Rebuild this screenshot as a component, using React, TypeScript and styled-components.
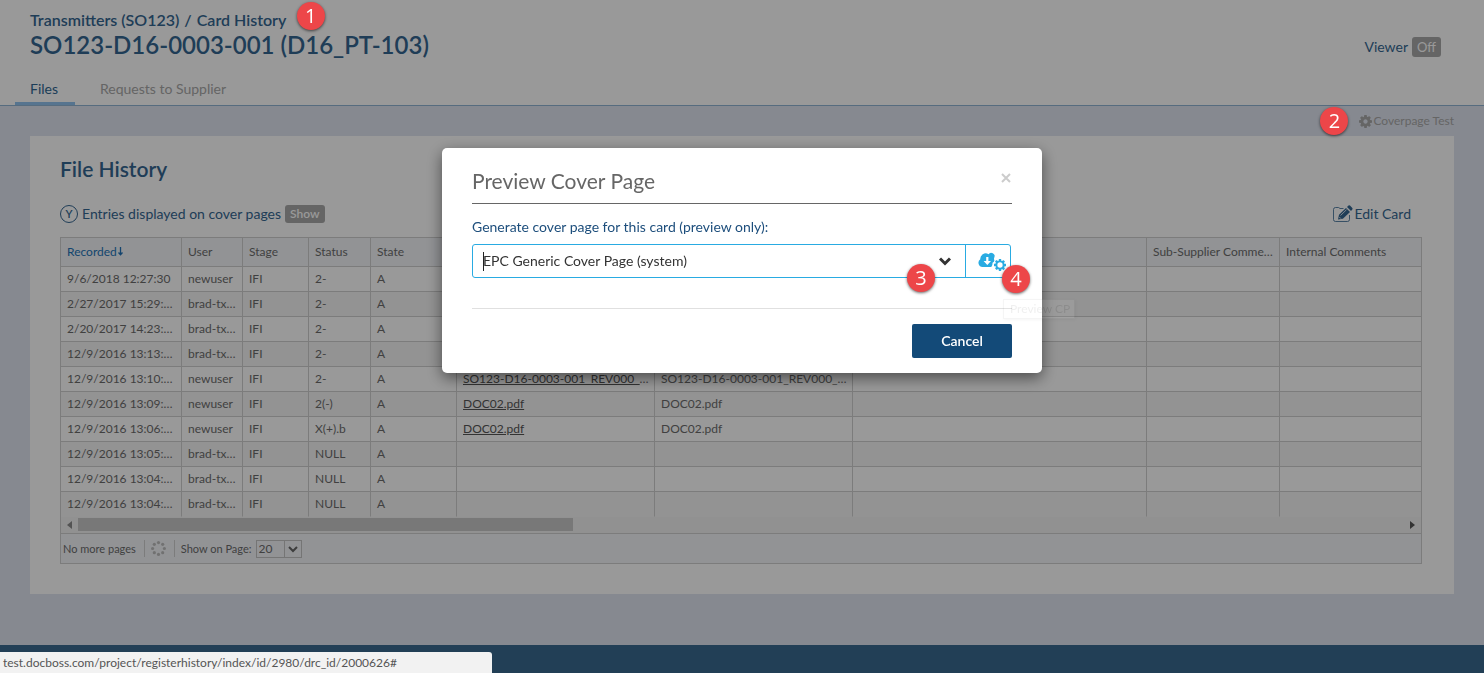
import React from "react";
import styled, { createGlobalStyle } from "styled-components";

const Global = createGlobalStyle`
  *, *::before, *::after { box-sizing: border-box; }
  body {
    margin: 0;
    font-family: Lato, "Liberation Sans", sans-serif;
    font-size: 14px;
    line-height: 20px;
    color: #356792;
    background: #e0e5f0;
  }
  button, input, select { font: inherit; color: inherit; }
  h1, h2, p { margin: 0; }
`;

const Page = styled.div`
  min-height: 100vh;
  display: flex;
  flex-direction: column;
`;

const Header = styled.header`
  background: #fff;
  border-bottom: 1px solid #90b4d4;
  display: flex;
  justify-content: space-between;
  padding: 10px 43px 0 30px;
`;

const Crumbs = styled.nav`
  display: flex;
  align-items: center;
  gap: 5px;
  font-size: 16px;
  font-weight: 600;
`;

const CrumbLink = styled.a`
  color: inherit;
  text-decoration: none;
`;

const Title = styled.h1`
  font-size: 24px;
  line-height: 30px;
  font-weight: 600;
`;

const Tabs = styled.div`
  display: flex;
  gap: 10px;
  margin: 14px 0 0 -15px;
`;

const Tab = styled.a<{ $active?: boolean }>`
  min-width: 60px;
  padding: 5px 15px 3px;
  border-bottom: 3px solid ${(p) => (p.$active ? "#8fc1ee" : "transparent")};
  color: ${(p) => (p.$active ? "#2f6793" : "#a8a8a8")};
  text-decoration: none;
`;

const Viewer = styled.div`
  display: flex;
  align-items: center;
  gap: 4px;
  height: 20px;
  margin-top: 27px;
`;

const Toggle = styled.button<{ $small?: boolean }>`
  height: ${(p) => (p.$small ? 18 : 20)}px;
  padding: 0 5px;
  border: 0;
  border-radius: 3px;
  background: #a8a8a8;
  color: #fff;
  font-size: ${(p) => (p.$small ? 12 : 13)}px;
  font-weight: ${(p) => (p.$small ? 600 : 400)};
  line-height: 18px;
`;

const Main = styled.main`
  flex: 1;
  padding: 0 30px 51px;
`;

const ActionBar = styled.div`
  display: flex;
  justify-content: flex-end;
  align-items: center;
  height: 30px;
  color: #a8a8a8;
  font-size: 12px;
`;

const IconLink = styled.a`
  position: relative;
  display: inline-flex;
  align-items: center;
  gap: 1px;
  color: inherit;
  text-decoration: none;
`;

const Panel = styled.section`
  background: #fff;
  padding: 20px 32px 30px 30px;
`;

const PanelTitle = styled.h2`
  font-size: 21px;
  line-height: 26px;
  font-weight: 600;
`;

const PanelBar = styled.div`
  display: flex;
  justify-content: space-between;
  align-items: center;
  padding: 22px 11px 13px 0;
`;

const Legend = styled.div`
  display: flex;
  align-items: center;
  gap: 4px;
`;

const CircleMark = styled.span`
  width: 18px;
  height: 18px;
  border: 1px solid #356792;
  border-radius: 50%;
  font-size: 11px;
  font-weight: 600;
  line-height: 16px;
  text-align: center;
`;

const Grid = styled.div`
  border: 1px solid #cfcfcf;
  color: #6c6c6c;
`;

const Table = styled.table`
  width: 100%;
  table-layout: fixed;
  border-collapse: separate;
  border-spacing: 0;
  font-size: 12px;
  line-height: 16px;
`;

const HeadCell = styled.th<{ $sorted?: boolean }>`
  height: 29px;
  padding: 0 4px 0 6px;
  background: #f3f5f9;
  border-right: 1px solid #cfcfcf;
  border-bottom: 1px solid #cfcfcf;
  color: ${(p) => (p.$sorted ? "#2474b8" : "#6c6c6c")};
  font-weight: 400;
  text-align: left;
  white-space: nowrap;
  overflow: hidden;
  text-overflow: ellipsis;
  &:last-child { border-right: 0; }
`;

const Row = styled.tr`
  &:nth-child(even) { background: #f5f5f5; }
  &:last-child td { border-bottom-color: transparent; }
`;

const Cell = styled.td`
  height: 25px;
  padding: 0 4px 0 6px;
  border-right: 1px solid #cfcfcf;
  border-bottom: 1px solid #cfcfcf;
  white-space: nowrap;
  overflow: hidden;
  text-overflow: ellipsis;
  &:last-child { border-right: 0; }
`;

const FileLink = styled.a`
  color: #555;
  text-decoration: underline;
`;

const ScrollBar = styled.div`
  display: flex;
  align-items: center;
  gap: 6px;
  height: 16px;
  padding: 0 6px 1px;
  background: #f2f2f2;
`;

const ScrollTrack = styled.div`
  flex: 1;
`;

const ScrollThumb = styled.div`
  width: 37.3%;
  height: 13px;
  background: #c8c8c8;
`;

const Pager = styled.div`
  display: flex;
  align-items: center;
  height: 30px;
  padding: 0 2px;
  border-top: 1px solid #cfcfcf;
  background: #f3f5f9;
  font-size: 11px;
`;

const PagerDivider = styled.span`
  width: 1px;
  height: 17px;
  margin: 0 6px 0 8px;
  background: #cfcfcf;
`;

const PageSize = styled.span`
  position: relative;
  display: inline-flex;
  margin-left: 4px;
  svg {
    position: absolute;
    top: 6px;
    right: 4px;
    pointer-events: none;
  }
`;

const PageSizeSelect = styled.select`
  appearance: none;
  width: 46px;
  height: 18px;
  padding: 0 2px;
  border: 1px solid #c4c4c4;
  border-radius: 0;
  background: linear-gradient(#c4c4c4, #c4c4c4) 27px 0 / 1px 100% no-repeat;
  font-size: 12px;
  line-height: 14px;
`;

const Footer = styled.footer`
  height: 28px;
  background: #3a698f;
`;

const Overlay = styled.div`
  position: fixed;
  inset: 0;
  z-index: 10;
  display: flex;
  justify-content: center;
  align-items: flex-start;
  padding-top: 148px;
  background: rgba(0, 0, 0, 0.4);
`;

const Modal = styled.div`
  position: relative;
  width: 600px;
  padding: 19px 30px 15px;
  border-radius: 5px;
  background: #fff;
  box-shadow: 0 5px 15px rgba(0, 0, 0, 0.5);
`;

const ModalHead = styled.div`
  display: flex;
  justify-content: space-between;
  align-items: center;
  padding-bottom: 8px;
  border-bottom: 1px solid #666;
`;

const ModalTitle = styled.h2`
  color: #666;
  font-size: 21px;
  line-height: 28px;
  font-weight: 400;
`;

const CloseButton = styled.button`
  display: flex;
  padding: 0;
  margin-bottom: 7px;
  border: 0;
  background: none;
  color: #ccc;
`;

const FieldLabel = styled.label`
  display: block;
  margin: 13px 0 7px;
  color: #1d4e7c;
`;

const Combo = styled.div`
  position: relative;
  display: flex;
  width: 539px;
  height: 34px;
  border: 1px solid #29abe2;
  border-radius: 3px;
`;

const ComboSelect = styled.select`
  flex: 1;
  appearance: none;
  padding: 0 10px;
  border: 0;
  background: none;
  color: #333;
  outline: none;
`;

const TextCaret = styled.span`
  position: absolute;
  left: 10px;
  top: 7px;
  width: 1px;
  height: 19px;
  background: #222;
`;

const ComboArrow = styled.svg`
  position: absolute;
  right: 59px;
  top: 12px;
  pointer-events: none;
`;

const PreviewButton = styled.button`
  width: 45px;
  padding: 6px 0 0 8px;
  border: 0;
  border-left: 1px solid #29abe2;
  background: none;
  color: #29abe2;
`;

const Tooltip = styled.span`
  position: absolute;
  left: 530px;
  top: 54px;
  width: 72px;
  height: 20px;
  padding: 0 6px;
  border: 1px solid #888;
  background: #fff;
  box-shadow: 1px 1px 3px rgba(0, 0, 0, 0.5);
  color: #444;
  font-size: 12px;
  line-height: 18px;
  white-space: nowrap;
  opacity: 0.08;
`;

const ModalFoot = styled.div`
  display: flex;
  justify-content: flex-end;
  margin-top: 30px;
  padding-top: 15px;
  border-top: 1px solid #e0e0e0;
`;

const CancelButton = styled.button`
  width: 100px;
  height: 34px;
  border: 0;
  border-radius: 2px;
  background: #134a78;
  color: #fff;
  font-weight: 600;
`;

const Marker = styled.span<{ $left: number; $top: number }>`
  position: absolute;
  left: ${(p) => p.$left}px;
  top: ${(p) => p.$top}px;
  z-index: 20;
  width: 28px;
  height: 28px;
  border-radius: 50%;
  background: #ed4649;
  box-shadow: 0 1px 3px rgba(0, 0, 0, 0.6);
  color: #fff;
  font: 20px/28px "Open Sans", sans-serif;
  text-align: center;
`;

const MarkerAnchor = styled.span`
  position: relative;
`;

const StatusBar = styled.div`
  position: fixed;
  left: 0;
  bottom: 0;
  z-index: 30;
  width: 492px;
  height: 21px;
  padding: 0 3px;
  border-radius: 0 3px 0 0;
  background: #f2f2f2;
  color: #555;
  font-size: 12px;
  line-height: 21px;
  white-space: nowrap;
`;

const cogPath =
  "M1024 896q0-106-75-181t-181-75-181 75-75 181 75 181 181 75 181-75 75-181zm512-109v222q0 12-8 23t-20 13l-185 28q-19 54-39 91 35 50 107 138 10 12 10 25t-9 23q-27 37-99 108t-94 71q-12 0-26-9l-138-108q-44 23-91 38-16 136-29 186-7 28-36 28h-222q-14 0-24.500-8.500t-11.500-21.500l-28-184q-49-16-90-37l-141 107q-10 9-25 9-14 0-25-11-126-114-165-168-7-10-7-23 0-12 8-23 15-21 51-66.500t54-70.500q-27-50-41-99l-183-27q-13-2-21-12.500t-8-23.500v-222q0-12 8-23t19-13l186-28q14-46 39-92-40-57-107-138-10-12-10-24 0-10 9-23 26-36 98.500-107.500t94.500-71.500q13 0 26 10l138 107q44-23 91-38 16-136 29-186 7-28 36-28h222q14 0 24.500 8.500t11.500 21.500l28 184q49 16 90 37l142-107q9-9 24-9 13 0 25 10 129 119 165 170 7 8 7 22 0 12-8 23-15 21-51 66.500t-54 70.500q26 50 41 98l183 28q13 2 21 12.500t8 23.500z";

const CogIcon = ({ size }: { size: number }) => (
  <svg width={size} height={size} viewBox="0 128 1536 1536" fill="currentColor" aria-hidden="true">
    <path d={cogPath} />
  </svg>
);

const EditIcon = () => (
  <svg width="20" height="18" viewBox="0 0 20 18" aria-hidden="true">
    <path d="M10.500 3.500H7L5.500 2.500H2.500Q.5 2.500.5 4.500V14.500Q.5 16.500 2.500 16.500H14.500Q16.500 16.500 16.500 14.500V10" fill="none" stroke="currentColor" strokeOpacity=".8" />
    <path d="M5 14.500L6 9.800 13 2.900 17 6.900 9.900 13.700zM14 2L15.500.6Q16.200 0 17 .6L19.300 2.900Q20 3.700 19.300 4.500L18 5.900z" fill="currentColor" />
    <path d="M7.500 10.500L13.500 4.700M6.300 12l1.600 1.600" stroke="#fff" strokeWidth=".8" />
  </svg>
);

const PreviewIcon = () => (
  <svg width="28" height="20" viewBox="0 0 28 20" aria-hidden="true">
    <path d="M4.500 15A4.300 4.300 0 0 1 2.300 7.200 5.300 5.300 0 0 1 10.500 2.300 3.300 3.300 0 0 1 16.300 5.400Q15.600 6.800 16.400 8.300 16.300 10.200 14.600 10.800 14.600 13.500 13.300 15z" fill="currentColor" />
    <path d="M8.200 5h2.200v4h2.600l-3.700 4-3.700-4h2.600z" fill="#fff" />
    <svg x="16" y="7" width="12" height="12" viewBox="0 128 1536 1536">
      <path fill="currentColor" d={cogPath} />
      <circle cx="768" cy="896" r="340" fill="#fff" />
    </svg>
  </svg>
);

const Spinner = () => (
  <svg width="15" height="15" viewBox="0 0 16 16" fill="#bdbdbd" aria-hidden="true">
    {Array.from({ length: 8 }, (_, i) => (
      <circle
        key={i}
        cx={8 + 6.300 * Math.cos((i * Math.PI) / 4)}
        cy={8 + 6.300 * Math.sin((i * Math.PI) / 4)}
        r="1.7"
      />
    ))}
  </svg>
);

const columns: { label: string; width?: number }[] = [
  { label: "Recorded", width: 121 },
  { label: "User", width: 61 },
  { label: "Stage", width: 66 },
  { label: "Status", width: 62 },
  { label: "State", width: 86 },
  { label: "File", width: 198 },
  { label: "Original File", width: 198 },
  { label: "" },
  { label: "Sub-Supplier Comments", width: 133 },
  { label: "Internal Comments", width: 141 },
];

const longName = "SO123-D16-0003-001_REV000_A.pdf";

const rows: string[][] = [
  ["9/6/2018 12:27:30", "newuser", "2-", ""],
  ["2/27/2017 15:29:10", "brad-txmain", "2-", ""],
  ["2/20/2017 14:23:10", "brad-txmain", "2-", ""],
  ["12/9/2016 13:13:10", "brad-txmain", "2-", ""],
  ["12/9/2016 13:10:10", "newuser", "2-", longName],
  ["12/9/2016 13:09:10", "newuser", "2(-)", "DOC02.pdf"],
  ["12/9/2016 13:06:10", "newuser", "X(+).b", "DOC02.pdf"],
  ["12/9/2016 13:05:10", "brad-txmain", "NULL", ""],
  ["12/9/2016 13:04:10", "brad-txmain", "NULL", ""],
  ["12/9/2016 13:04:10", "brad-txmain", "NULL", ""],
];

export default function App() {
  return (
    <>
      <Global />
      <Page>
        <Header>
          <div>
            <Crumbs aria-label="Breadcrumb">
              <CrumbLink href="#">Transmitters (SO123)</CrumbLink>
              <span>/</span>
              <MarkerAnchor>
                Card History
                <Marker $left={100} $top={-8}>1</Marker>
              </MarkerAnchor>
            </Crumbs>
            <Title>SO123-D16-0003-001 (D16_PT-103)</Title>
            <Tabs>
              <Tab href="#" $active>Files</Tab>
              <Tab href="#">Requests to Supplier</Tab>
            </Tabs>
          </div>
          <Viewer>
            <span>Viewer</span>
            <Toggle>Off</Toggle>
          </Viewer>
        </Header>

        <Main>
          <ActionBar>
            <IconLink href="#">
              <CogIcon size={13} />
              Coverpage Test
              <Marker $left={-39} $top={-4}>2</Marker>
            </IconLink>
          </ActionBar>

          <Panel>
            <PanelTitle>File History</PanelTitle>
            <PanelBar>
              <Legend>
                <CircleMark>Y</CircleMark>
                <span>Entries displayed on cover pages</span>
                <Toggle $small>Show</Toggle>
              </Legend>
              <IconLink href="#">
                <EditIcon />
                Edit Card
              </IconLink>
            </PanelBar>

            <Grid>
              <Table>
                <colgroup>
                  {columns.map((c, i) => (
                    <col key={i} width={c.width} />
                  ))}
                </colgroup>
                <thead>
                  <tr>
                    {columns.map((c, i) => (
                      <HeadCell key={i} scope="col" $sorted={i === 0}>
                        {c.label}
                        {i === 0 && (
                          <svg width="7" height="9" viewBox="0 0 7 9" aria-hidden="true">
                            <path d="M3.500 0V7M1.500 5.500L3.500 7.800 5.500 5.500" fill="none" stroke="currentColor" strokeWidth="1.300" />
                          </svg>
                        )}
                      </HeadCell>
                    ))}
                  </tr>
                </thead>
                <tbody>
                  {rows.map(([date, user, status, file], i) => (
                    <Row key={i}>
                      <Cell>{date}</Cell>
                      <Cell>{user}</Cell>
                      <Cell>IFI</Cell>
                      <Cell>{status}</Cell>
                      <Cell>A</Cell>
                      <Cell>{file && <FileLink href="#">{file}</FileLink>}</Cell>
                      <Cell>{file}</Cell>
                      <Cell />
                      <Cell />
                      <Cell />
                    </Row>
                  ))}
                </tbody>
              </Table>
              <ScrollBar>
                <svg width="5" height="8" viewBox="0 0 5 8" aria-hidden="true">
                  <path d="M5 0v8L0 4z" fill="#8a8a8a" />
                </svg>
                <ScrollTrack>
                  <ScrollThumb />
                </ScrollTrack>
                <svg width="5" height="8" viewBox="0 0 5 8" aria-hidden="true">
                  <path d="M0 0v8l5-4z" fill="#555" />
                </svg>
              </ScrollBar>
              <Pager>
                <span>No more pages</span>
                <PagerDivider />
                <Spinner />
                <PagerDivider />
                <label htmlFor="page-size">Show on Page:</label>
                <PageSize>
                  <PageSizeSelect id="page-size" defaultValue="20">
                    <option>20</option>
                    <option>50</option>
                  </PageSizeSelect>
                  <svg width="10" height="7" viewBox="0 0 10 7" aria-hidden="true">
                    <path d="M1 1l4 4 4-4" fill="none" stroke="#666" strokeWidth="2" />
                  </svg>
                </PageSize>
              </Pager>
            </Grid>
          </Panel>
        </Main>
        <Footer />
      </Page>

      <Overlay>
        <Modal role="dialog" aria-labelledby="modal-title">
          <ModalHead>
            <ModalTitle id="modal-title">Preview Cover Page</ModalTitle>
            <CloseButton aria-label="Close">
              <svg width="12" height="12" viewBox="0 0 12 12" aria-hidden="true">
                <path d="M2 2l8 8M10 2l-8 8" stroke="currentColor" strokeWidth="2" />
              </svg>
            </CloseButton>
          </ModalHead>
          <FieldLabel htmlFor="cover-page">Generate cover page for this card (preview only):</FieldLabel>
          <Combo>
            <ComboSelect id="cover-page" defaultValue="epc">
              <option value="epc">EPC Generic Cover Page (system)</option>
            </ComboSelect>
            <TextCaret />
            <ComboArrow width="12" height="9" viewBox="0 0 12 9" aria-hidden="true">
              <path d="M1 1.500l5 5 5-5" fill="none" stroke="#333" strokeWidth="3" />
            </ComboArrow>
            <PreviewButton aria-label="Preview CP">
              <PreviewIcon />
            </PreviewButton>
            <Tooltip role="tooltip">Preview CP</Tooltip>
            <Marker $left={434} $top={19}>3</Marker>
            <Marker $left={529} $top={20}>4</Marker>
          </Combo>
          <ModalFoot>
            <CancelButton>Cancel</CancelButton>
          </ModalFoot>
        </Modal>
      </Overlay>
      <StatusBar>test.docboss.com/project/registerhistory/index/id/2980/drc_id/2000626#</StatusBar>
    </>
  );
}
